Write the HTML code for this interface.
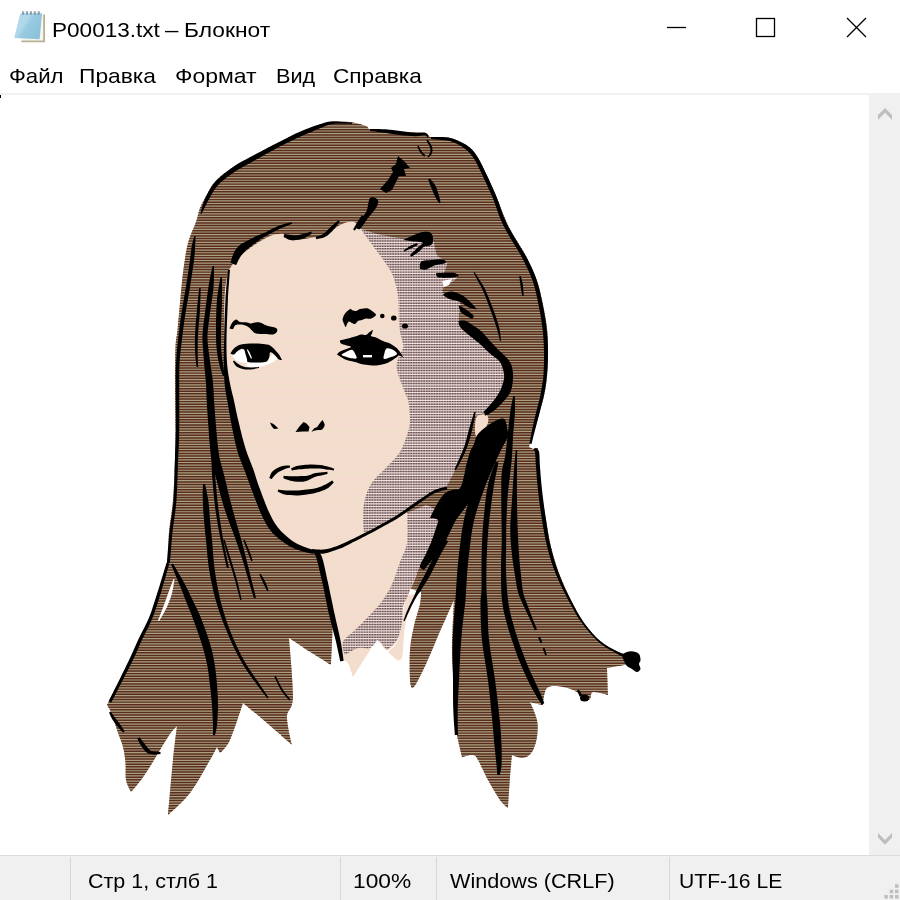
<!DOCTYPE html>
<html lang="ru">
<head>
<meta charset="utf-8">
<title>P00013.txt – Блокнот</title>
<style>
html,body{margin:0;padding:0;background:#fff;}
body{width:900px;height:900px;position:relative;overflow:hidden;font-family:"Liberation Sans",sans-serif;color:#000;}
.t{position:absolute;white-space:nowrap;line-height:1;transform-origin:0 0;}
.ti{top:19.5px;font-size:20.3px;}
.menu{top:66.2px;font-size:20.8px;}
#menuline{position:absolute;left:0;top:93px;width:900px;height:2px;background:#f0f0f0;}
#scroll{position:absolute;left:869px;top:95px;width:31px;height:760px;background:#f0f0f0;}
#status{position:absolute;left:0;top:855px;width:900px;height:45px;background:#f0f0f0;border-top:1px solid #dcdcdc;box-sizing:border-box;}
.sep{position:absolute;top:857px;width:1px;height:44px;background:#d7d7d7;}
.st{top:870.5px;font-size:20.8px;}
#art{position:absolute;left:0;top:95px;width:870px;height:759px;}
</style>
</head>
<body>
<!-- title bar -->
<svg id="icon" style="position:absolute;left:0;top:0" width="60" height="56" viewBox="0 0 60 56">
  <defs><linearGradient id="ig" x1="0" y1="0" x2="1" y2="0.6"><stop offset="0" stop-color="#b9deee"/><stop offset="0.45" stop-color="#aed7ea"/><stop offset="0.56" stop-color="#98cbe2"/><stop offset="1" stop-color="#8cc2dc"/></linearGradient></defs>
  <path d="M22 14.5 H45 V42.2 H21.5 Z" fill="#b9b195"/>
  <path d="M22 14 H43.2 V40.6 H21 Z" fill="#f7f5ee"/>
  <path d="M20.3 13.3 L42.1 13.3 L39.6 39.3 L14.2 38 Z" fill="url(#ig)"/>
  <path d="M22 13 H41.5" stroke="#6f7f95" stroke-width="3.4" stroke-dasharray="2.2 1.7" opacity="0.7"/>
</svg>
<div class="t ti" style="left:51.6px;transform:scaleX(1.112)">P00013.txt</div>
<div class="t ti" style="left:165.3px;transform:scaleX(1.188)">–</div>
<div class="t ti" style="left:183.5px;transform:scaleX(1.124)">Блокнот</div>
<svg style="position:absolute;left:650px;top:0" width="250" height="58" viewBox="0 0 250 58">
  <path d="M17 27.5 H36" stroke="#000" stroke-width="1.3" fill="none"/>
  <rect x="106.5" y="18.5" width="18" height="18" stroke="#000" stroke-width="1.3" fill="none"/>
  <path d="M197 18 L216 37 M216 18 L197 37" stroke="#000" stroke-width="1.3" fill="none"/>
</svg>
<!-- menu -->
<div class="t menu" style="left:8.9px;transform:scaleX(1.067)">Файл</div>
<div class="t menu" style="left:79.3px;transform:scaleX(1.096)">Правка</div>
<div class="t menu" style="left:175.4px;transform:scaleX(1.105)">Формат</div>
<div class="t menu" style="left:276.2px;transform:scaleX(1.041)">Вид</div>
<div class="t menu" style="left:332.8px;transform:scaleX(1.088)">Справка</div>
<div id="menuline"></div>
<!-- scrollbar -->
<div id="scroll"></div>
<svg style="position:absolute;left:870px;top:95px" width="30" height="760" viewBox="870 95 30 760">
  <path d="M885 108 L892 115 L892 119.7 L885 112.7 L878 119.7 L878 115 Z" fill="#bfbdbd"/>
  <path d="M878 833 L885 840 L892 833 L892 837.5 L885 844.7 L878 837.5 Z" fill="#bfbdbd"/>
</svg>
<!-- art -->
<svg id="art" viewBox="0 95 870 759" shape-rendering="geometricPrecision">
<defs><mask id="stripes" maskUnits="userSpaceOnUse" x="0" y="95" width="870" height="759"><path d="M0 96 h870 M0 98.6 h870 M0 101.2 h870 M0 103.8 h870 M0 106.4 h870 M0 109 h870 M0 111.5 h870 M0 114.1 h870 M0 116.7 h870 M0 119.3 h870 M0 121.9 h870 M0 124.5 h870 M0 127.1 h870 M0 129.7 h870 M0 132.3 h870 M0 134.9 h870 M0 137.4 h870 M0 140 h870 M0 142.6 h870 M0 145.2 h870 M0 147.8 h870 M0 150.4 h870 M0 153 h870 M0 155.6 h870 M0 158.2 h870 M0 160.8 h870 M0 163.3 h870 M0 165.9 h870 M0 168.5 h870 M0 171.1 h870 M0 173.7 h870 M0 176.3 h870 M0 178.9 h870 M0 181.5 h870 M0 184.1 h870 M0 186.7 h870 M0 189.2 h870 M0 191.8 h870 M0 194.4 h870 M0 197 h870 M0 199.6 h870 M0 202.2 h870 M0 204.8 h870 M0 207.4 h870 M0 210 h870 M0 212.6 h870 M0 215.1 h870 M0 217.7 h870 M0 220.3 h870 M0 222.9 h870 M0 225.5 h870 M0 228.1 h870 M0 230.7 h870 M0 233.3 h870 M0 235.9 h870 M0 238.5 h870 M0 241 h870 M0 243.6 h870 M0 246.2 h870 M0 248.8 h870 M0 251.4 h870 M0 254 h870 M0 256.6 h870 M0 259.2 h870 M0 261.8 h870 M0 264.4 h870 M0 266.9 h870 M0 269.5 h870 M0 272.1 h870 M0 274.7 h870 M0 277.3 h870 M0 279.9 h870 M0 282.5 h870 M0 285.1 h870 M0 287.7 h870 M0 290.2 h870 M0 292.8 h870 M0 295.4 h870 M0 298 h870 M0 300.6 h870 M0 303.2 h870 M0 305.8 h870 M0 308.4 h870 M0 311 h870 M0 313.6 h870 M0 316.1 h870 M0 318.7 h870 M0 321.3 h870 M0 323.9 h870 M0 326.5 h870 M0 329.1 h870 M0 331.7 h870 M0 334.3 h870 M0 336.9 h870 M0 339.5 h870 M0 342 h870 M0 344.6 h870 M0 347.2 h870 M0 349.8 h870 M0 352.4 h870 M0 355 h870 M0 357.6 h870 M0 360.2 h870 M0 362.8 h870 M0 365.4 h870 M0 367.9 h870 M0 370.5 h870 M0 373.1 h870 M0 375.7 h870 M0 378.3 h870 M0 380.9 h870 M0 383.5 h870 M0 386.1 h870 M0 388.7 h870 M0 391.3 h870 M0 393.8 h870 M0 396.4 h870 M0 399 h870 M0 401.6 h870 M0 404.2 h870 M0 406.8 h870 M0 409.4 h870 M0 412 h870 M0 414.6 h870 M0 417.2 h870 M0 419.7 h870 M0 422.3 h870 M0 424.9 h870 M0 427.5 h870 M0 430.1 h870 M0 432.7 h870 M0 435.3 h870 M0 437.9 h870 M0 440.5 h870 M0 443.1 h870 M0 445.6 h870 M0 448.2 h870 M0 450.8 h870 M0 453.4 h870 M0 456 h870 M0 458.6 h870 M0 461.2 h870 M0 463.8 h870 M0 466.4 h870 M0 469 h870 M0 471.5 h870 M0 474.1 h870 M0 476.7 h870 M0 479.3 h870 M0 481.9 h870 M0 484.5 h870 M0 487.1 h870 M0 489.7 h870 M0 492.3 h870 M0 494.9 h870 M0 497.4 h870 M0 500 h870 M0 502.6 h870 M0 505.2 h870 M0 507.8 h870 M0 510.4 h870 M0 513 h870 M0 515.6 h870 M0 518.2 h870 M0 520.8 h870 M0 523.3 h870 M0 525.9 h870 M0 528.5 h870 M0 531.1 h870 M0 533.7 h870 M0 536.3 h870 M0 538.9 h870 M0 541.5 h870 M0 544.1 h870 M0 546.7 h870 M0 549.2 h870 M0 551.8 h870 M0 554.4 h870 M0 557 h870 M0 559.6 h870 M0 562.2 h870 M0 564.8 h870 M0 567.4 h870 M0 570 h870 M0 572.6 h870 M0 575.1 h870 M0 577.7 h870 M0 580.3 h870 M0 582.9 h870 M0 585.5 h870 M0 588.1 h870 M0 590.7 h870 M0 593.3 h870 M0 595.9 h870 M0 598.5 h870 M0 601 h870 M0 603.6 h870 M0 606.2 h870 M0 608.8 h870 M0 611.4 h870 M0 614 h870 M0 616.6 h870 M0 619.2 h870 M0 621.8 h870 M0 624.4 h870 M0 626.9 h870 M0 629.5 h870 M0 632.1 h870 M0 634.7 h870 M0 637.3 h870 M0 639.9 h870 M0 642.5 h870 M0 645.1 h870 M0 647.7 h870 M0 650.3 h870 M0 652.8 h870 M0 655.4 h870 M0 658 h870 M0 660.6 h870 M0 663.2 h870 M0 665.8 h870 M0 668.4 h870 M0 671 h870 M0 673.6 h870 M0 676.2 h870 M0 678.7 h870 M0 681.3 h870 M0 683.9 h870 M0 686.5 h870 M0 689.1 h870 M0 691.7 h870 M0 694.3 h870 M0 696.9 h870 M0 699.5 h870 M0 702.1 h870 M0 704.7 h870 M0 707.2 h870 M0 709.8 h870 M0 712.4 h870 M0 715 h870 M0 717.6 h870 M0 720.2 h870 M0 722.8 h870 M0 725.4 h870 M0 728 h870 M0 730.6 h870 M0 733.1 h870 M0 735.7 h870 M0 738.3 h870 M0 740.9 h870 M0 743.5 h870 M0 746.1 h870 M0 748.7 h870 M0 751.3 h870 M0 753.9 h870 M0 756.5 h870 M0 759 h870 M0 761.6 h870 M0 764.2 h870 M0 766.8 h870 M0 769.4 h870 M0 772 h870 M0 774.6 h870 M0 777.2 h870 M0 779.8 h870 M0 782.4 h870 M0 784.9 h870 M0 787.5 h870 M0 790.1 h870 M0 792.7 h870 M0 795.3 h870 M0 797.9 h870 M0 800.5 h870 M0 803.1 h870 M0 805.7 h870 M0 808.3 h870 M0 810.8 h870 M0 813.4 h870 M0 816 h870 M0 818.6 h870 M0 821.2 h870 M0 823.8 h870 M0 826.4 h870 M0 829 h870 M0 831.6 h870 M0 834.2 h870 M0 836.7 h870 M0 839.3 h870 M0 841.9 h870 M0 844.5 h870 M0 847.1 h870 M0 849.7 h870 M0 852.3 h870 M0 854.9 h870" stroke="#fff" stroke-width="1.45" fill="none"/></mask></defs>
<g><path d="M322 124 C326.8 122.5 328.3 121.9 333 121.6 C337.7 121.3 344.5 121.3 350 122 C355.5 122.7 362.3 124.7 366 126 C369.7 127.3 366.3 129 372 130 C377.7 131 391 131.5 400 132 C409 132.5 426 133 426 133 C426 133 430 137 430 137 C430 137 445 137.2 450 138 C455 138.8 456.7 140.3 460 142 C463.3 143.7 467 145.3 470 148 C473 150.7 475.3 153.7 478 158 C480.7 162.3 483 167.7 486 174 C489 180.3 493 189 496 196 C499 203 501.5 210.2 504 216 C506.5 221.8 507.3 224.3 511 231 C514.7 237.7 521.8 248.2 526 256 C530.2 263.8 533.3 270.7 536 278 C538.7 285.3 540.2 291.7 542 300 C543.8 308.3 546 319.3 547 328 C548 336.7 548 343.8 548 352 C548 360.2 547.7 369.7 547 377 C546.3 384.3 545.2 390.5 544 396 C542.8 401.5 541.3 405.2 540 410 C538.7 414.8 537.5 420 536 425 C534.5 430 532.2 436.3 531 440 C529.8 443.7 529 447 529 447 C529 447 533 449 533 449 C533 449 538 448 538 448 C538 448 538.5 460 539 467 C539.5 474 539.8 481.2 541 490 C542.2 498.8 544.3 510.5 546 520 C547.7 529.5 548.8 538.2 551 547 C553.2 555.8 555.7 564.2 559 573 C562.3 581.8 566.8 591.7 571 600 C575.2 608.3 579 616 584 623 C589 630 595.3 637.2 601 642 C606.7 646.8 613.5 649.7 618 652 C622.5 654.3 626 654 628 656 C630 658 630 664 630 664 C630 664 607 668 607 668 C607 668 608 695 608 695 C608 695 596 691.3 593 692 C590 692.7 591.5 697.7 590 699 C588.5 700.3 586.2 701.2 584 700 C581.8 698.8 580.5 694.2 577 692 C573.5 689.8 568 687.7 563 687 C558 686.3 550.3 685 547 688 C543.7 691 543 705 543 705 C543 705 535.2 703.5 533 703 C530.8 702.5 530 702 530 702 C530 702 535.8 714.2 537 720 C538.2 725.8 537.8 731.7 537 737 C536.2 742.3 534.3 748.5 532 752 C529.7 755.5 526.3 757.5 523 758 C519.7 758.5 512 755 512 755 C512 755 510.7 768.2 510 777 C509.3 785.8 508 808 508 808 C508 808 503.3 804.7 500 800 C496.7 795.3 491.7 786.7 488 780 C484.3 773.3 480.5 764.2 478 760 C475.5 755.8 475.7 755.5 473 755 C470.3 754.5 462 757 462 757 C462 757 459.2 746.2 458 740 C456.8 733.8 455.7 728.8 455 720 C454.3 711.2 454.5 698.7 454 687 C453.5 675.3 452 664.5 452 650 C452 635.5 454 600 454 600 C454 600 448.7 612 446 618 C443.3 624 441.3 628.3 438 636 C434.7 643.7 429.7 656 426 664 C422.3 672 418.3 680 416 684 C413.7 688 412 688 412 688 C412 688 410.3 686.3 410 680 C409.7 673.7 409.3 659 410 650 C410.7 641 412.3 633.7 414 626 C415.7 618.3 418.8 609.7 420 604 C421.2 598.3 421 592 421 592 C421 592 400 585 400 585 C400 585 334 600 334 600 C334 600 332.5 632 332.5 632 C332.5 632 331 665 331 665 C331 665 324 660.5 320 658 C316 655.5 312.2 653.4 307 650 C301.8 646.6 288.9 637.8 288.9 637.8 C288.9 637.8 293.3 683.8 293 697 C292.7 710.2 287.2 709 287 717 C286.8 725 292 745 292 745 C292 745 275.2 730 267 723 C258.8 716 243 703 243 703 C243 703 233.8 731.7 230 740 C226.2 748.3 220 753 220 753 C220 753 217 747 217 747 C217 747 214.5 752.3 210 760 C205.5 767.7 197 783.8 190 793 C183 802.2 168 815 168 815 C168 815 171.5 774.8 173 760 C174.5 745.2 177 726 177 726 C177 726 172.8 730 170 734 C167.2 738 163.2 744.8 160 750 C156.8 755.2 154.2 760 151 765 C147.8 770 144.3 775.5 141 780 C137.7 784.5 131 792 131 792 C131 792 126.9 784.8 126 780 C125.1 775.2 126 768.5 125.5 763 C125 757.5 124.4 752.5 123 747 C121.6 741.5 118.8 735.5 117 730 C115.2 724.5 113.7 718.2 112 714 C110.3 709.8 107 705 107 705 C107 705 122.3 675.8 130 660 C137.7 644.2 146.8 626.2 153 610 C159.2 593.8 164.3 576 167 563 C169.7 550 168 542.5 169 532 C170 521.5 172 512 173 500 C174 488 174.6 471.7 175 460 C175.4 448.3 175.5 443.3 175.5 430 C175.5 416.7 175 393.8 175 380 C175 366.2 175.1 355.3 175.5 347 C175.9 338.7 176.8 337.3 177.5 330 C178.2 322.7 179.1 312.5 180 303 C180.9 293.5 181.7 283 183 273 C184.3 263 185.8 251.5 188 243 C190.2 234.5 194 227.8 196 222 C198 216.2 198.2 212.5 200 208 C201.8 203.5 204.1 199.5 206.7 195 C209.3 190.5 211.2 185.7 215.6 181 C220 176.3 227.4 171 233.3 167 C239.2 163 245.1 160.3 251 157 C256.9 153.7 263.1 150.4 269 147.3 C274.9 144.2 280.8 141.2 286.7 138.4 C292.6 135.6 298.5 132.8 304.4 130.4 C310.3 128 317.2 125.5 322 124 Z" fill="#aaa07c"/>
<path d="M229 270 C229 270 232.5 263.7 236 260 C239.5 256.3 244.3 252 250 248 C255.7 244 264.3 238.3 270 236 C275.7 233.7 280.7 233.3 284 234 C287.3 234.7 285.7 239.3 290 240 C294.3 240.7 304 239 310 238 C316 237 320.7 236.3 326 234 C331.3 231.7 337.3 226 342 224 C346.7 222 350.8 221.2 354 222 C357.2 222.8 361 229 361 229 C361 229 372 240 372 240 C372 240 386 257 386 257 C386 257 397 272 397 272 C397 272 408 300 408 300 C408 300 420 400 420 400 C420 400 440 480 440 480 C440 480 447 487 446 489 C445 491 438.3 490 434 492 C429.7 494 425.7 497.2 420 501 C414.3 504.8 405 511.7 400 515 C395 518.3 395 518.2 390 521 C385 523.8 376.7 528.5 370 532 C363.3 535.5 356.3 539.2 350 542 C343.7 544.8 338 547.3 332 549 C326 550.7 319.3 552 314 552 C308.7 552 304.7 550.3 300 549 C295.3 547.7 290.7 547 286 544 C281.3 541 276.3 536.5 272 531 C267.7 525.5 263.7 519.3 260 511 C256.3 502.7 253.3 492.7 250 481 C246.7 469.3 243 454.3 240 441 C237 427.7 234 411.2 232 401 C230 390.8 229.2 387.3 228 380 C226.8 372.7 225.7 365.3 225 357 C224.3 348.7 224 341.2 224 330 C224 318.8 224.2 300 225 290 C225.8 280 229 270 229 270 Z" fill="#efe2c9"/>
<path d="M314 552 C314 552 326 550.7 332 549 C338 547.3 343.7 544.8 350 542 C356.3 539.2 363.3 535.5 370 532 C376.7 528.5 383.8 524.3 390 521 C396.2 517.7 407 512 407 512 C407 512 420 550 420 550 C420 550 419 565.5 417 573 C415 580.5 410.3 589.3 408 595 C405.7 600.7 404 602.3 403 607 C402 611.7 403 617.5 402 623 C401 628.5 399.5 635.5 397 640 C394.5 644.5 389.8 649.7 387 650 C384.2 650.3 381.7 643.7 380 642 C378.3 640.3 378.7 638.7 377 640 C375.3 641.3 370 650 370 650 C370 650 353 677 353 677 C353 677 349.8 665.8 348 663 C346.2 660.2 342 660 342 660 C342 660 339.7 647.5 338 640 C336.3 632.5 334.2 624.7 332 615 C329.8 605.3 327 591.2 325 582 C323 572.8 321.8 565 320 560 C318.2 555 314 552 314 552 Z" fill="#efe2c9"/>
<path d="M407 595 C407 595 418 594 418 594 C418 594 414.8 599 413 603 C411.2 607 408.5 613 407 618 C405.5 623 404.8 626.5 404 633 C403.2 639.5 403.2 652.5 402 657 C400.8 661.5 397 660 397 660 C397 660 388 652 388 652 C388 652 394.7 646.5 397 642 C399.3 637.5 400.8 630.8 402 625 C403.2 619.2 403.2 612 404 607 C404.8 602 407 595 407 595 Z" fill="#efe2c9"/>
<path d="M361 229 C361 229 366.3 230.7 369 231.5 C371.7 232.3 373.2 233.1 377 234 C380.8 234.9 387.7 236.2 392 237 C396.3 237.8 399.7 238.4 403 238.5 C406.3 238.6 409.2 238.2 412 237.5 C414.8 236.8 416.7 234.2 420 234 C423.3 233.8 429.7 234.7 432 236 C434.3 237.3 433.2 238.8 434 242 C434.8 245.2 435.3 252 437 255 C438.7 258 442.3 258.5 444 260 C445.7 261.5 447 261.8 447 264 C447 266.2 444 273 444 273 C444 273 457 275 457 275 C457 275 457.2 278 455 280 C452.8 282 446 284.8 444 287 C442 289.2 443 293 443 293 C443 293 457.3 299.7 460 303 C462.7 306.3 459.2 310 459 313 C458.8 316 459 321 459 321 C459 321 463.5 329.5 467 333 C470.5 336.5 476.2 339.2 480 342 C483.8 344.8 486.7 347.3 490 350 C493.3 352.7 497.3 354.3 500 358 C502.7 361.7 505.3 366.3 506 372 C506.7 377.7 505.7 387.2 504 392 C502.3 396.8 499.3 397.7 496 401 C492.7 404.3 487.7 409.5 484 412 C480.3 414.5 474 416 474 416 C474 416 471 431.3 468 440 C465 448.7 459.7 460 456 468 C452.3 476 446 488 446 488 C446 488 438.3 489 434 491 C429.7 493 425.7 496.2 420 500 C414.3 503.8 405 510.7 400 514 C395 517.3 395 517.2 390 520 C385 522.8 374.3 529 370 531 C365.7 533 364 532 364 532 C364 532 363 524.7 363 520 C363 515.3 363.2 509 364 504 C364.8 499 366.3 494 368 490 C369.7 486 371 483.7 374 480 C377 476.3 381.7 472.7 386 468 C390.3 463.3 396.3 458 400 452 C403.7 446 406.3 437.3 408 432 C409.7 426.7 409.9 425 410 420 C410.1 415 409.2 406.3 408.5 402 C407.8 397.7 407.1 398 405.6 394 C404.1 390 401 382.5 399.5 378 C398 373.5 396.8 370.7 396.7 367 C396.6 363.3 397.9 359.3 399 356 C400.1 352.7 403.2 350.3 403.5 347 C403.8 343.7 401.8 340.2 401 336 C400.2 331.8 399.4 328.2 399 322 C398.6 315.8 399 305.5 398.4 299 C397.8 292.5 396.6 287.7 395.3 283 C394 278.3 393 275.3 390.7 271 C388.4 266.7 384.4 261.4 381.3 257 C378.2 252.6 374.7 248.2 372 244.5 C369.3 240.8 366.8 237.6 365 235 C363.2 232.4 361 229 361 229 Z" fill="#efe0dc"/>
<path d="M407 513 C407 513 426 505 426 505 C426 505 439 509.2 440 515 C441 520.8 434.8 532.5 432 540 C429.2 547.5 425.5 554.5 423 560 C420.5 565.5 419.5 567.2 417 573 C414.5 578.8 410.3 589.3 408 595 C405.7 600.7 404 602.3 403 607 C402 611.7 403 617.5 402 623 C401 628.5 399.5 635.5 397 640 C394.5 644.5 387 650 387 650 C387 650 381.7 643.7 380 642 C378.3 640.3 377 640 377 640 C377 640 373.2 646.7 370 648 C366.8 649.3 362.2 646.8 358 648 C353.8 649.2 345 655 345 655 C345 655 341.3 646.2 343 642 C344.7 637.8 351 634 355 630 C359 626 362.3 623 367 618 C371.7 613 378.7 606 383 600 C387.3 594 390.2 588.3 393 582 C395.8 575.7 397.7 568.5 400 562 C402.3 555.5 405.8 551.2 407 543 C408.2 534.8 407 513 407 513 Z" fill="#efe0dc"/>
<path d="M476.7 416.7 C478.6 414 484.8 413.9 486.7 415 C488.6 416.1 488.8 420.2 487.8 423.3 C486.9 426.4 482.9 431.1 481 433.3 C479.1 435.5 477.7 437.1 476.7 436.7 C475.7 436.3 475 434.3 475 431 C475 427.7 474.8 419.4 476.7 416.7 Z" fill="#efe2c9"/></g>
<g mask="url(#stripes)"><path d="M322 124 C326.8 122.5 328.3 121.9 333 121.6 C337.7 121.3 344.5 121.3 350 122 C355.5 122.7 362.3 124.7 366 126 C369.7 127.3 366.3 129 372 130 C377.7 131 391 131.5 400 132 C409 132.5 426 133 426 133 C426 133 430 137 430 137 C430 137 445 137.2 450 138 C455 138.8 456.7 140.3 460 142 C463.3 143.7 467 145.3 470 148 C473 150.7 475.3 153.7 478 158 C480.7 162.3 483 167.7 486 174 C489 180.3 493 189 496 196 C499 203 501.5 210.2 504 216 C506.5 221.8 507.3 224.3 511 231 C514.7 237.7 521.8 248.2 526 256 C530.2 263.8 533.3 270.7 536 278 C538.7 285.3 540.2 291.7 542 300 C543.8 308.3 546 319.3 547 328 C548 336.7 548 343.8 548 352 C548 360.2 547.7 369.7 547 377 C546.3 384.3 545.2 390.5 544 396 C542.8 401.5 541.3 405.2 540 410 C538.7 414.8 537.5 420 536 425 C534.5 430 532.2 436.3 531 440 C529.8 443.7 529 447 529 447 C529 447 533 449 533 449 C533 449 538 448 538 448 C538 448 538.5 460 539 467 C539.5 474 539.8 481.2 541 490 C542.2 498.8 544.3 510.5 546 520 C547.7 529.5 548.8 538.2 551 547 C553.2 555.8 555.7 564.2 559 573 C562.3 581.8 566.8 591.7 571 600 C575.2 608.3 579 616 584 623 C589 630 595.3 637.2 601 642 C606.7 646.8 613.5 649.7 618 652 C622.5 654.3 626 654 628 656 C630 658 630 664 630 664 C630 664 607 668 607 668 C607 668 608 695 608 695 C608 695 596 691.3 593 692 C590 692.7 591.5 697.7 590 699 C588.5 700.3 586.2 701.2 584 700 C581.8 698.8 580.5 694.2 577 692 C573.5 689.8 568 687.7 563 687 C558 686.3 550.3 685 547 688 C543.7 691 543 705 543 705 C543 705 535.2 703.5 533 703 C530.8 702.5 530 702 530 702 C530 702 535.8 714.2 537 720 C538.2 725.8 537.8 731.7 537 737 C536.2 742.3 534.3 748.5 532 752 C529.7 755.5 526.3 757.5 523 758 C519.7 758.5 512 755 512 755 C512 755 510.7 768.2 510 777 C509.3 785.8 508 808 508 808 C508 808 503.3 804.7 500 800 C496.7 795.3 491.7 786.7 488 780 C484.3 773.3 480.5 764.2 478 760 C475.5 755.8 475.7 755.5 473 755 C470.3 754.5 462 757 462 757 C462 757 459.2 746.2 458 740 C456.8 733.8 455.7 728.8 455 720 C454.3 711.2 454.5 698.7 454 687 C453.5 675.3 452 664.5 452 650 C452 635.5 454 600 454 600 C454 600 448.7 612 446 618 C443.3 624 441.3 628.3 438 636 C434.7 643.7 429.7 656 426 664 C422.3 672 418.3 680 416 684 C413.7 688 412 688 412 688 C412 688 410.3 686.3 410 680 C409.7 673.7 409.3 659 410 650 C410.7 641 412.3 633.7 414 626 C415.7 618.3 418.8 609.7 420 604 C421.2 598.3 421 592 421 592 C421 592 400 585 400 585 C400 585 334 600 334 600 C334 600 332.5 632 332.5 632 C332.5 632 331 665 331 665 C331 665 324 660.5 320 658 C316 655.5 312.2 653.4 307 650 C301.8 646.6 288.9 637.8 288.9 637.8 C288.9 637.8 293.3 683.8 293 697 C292.7 710.2 287.2 709 287 717 C286.8 725 292 745 292 745 C292 745 275.2 730 267 723 C258.8 716 243 703 243 703 C243 703 233.8 731.7 230 740 C226.2 748.3 220 753 220 753 C220 753 217 747 217 747 C217 747 214.5 752.3 210 760 C205.5 767.7 197 783.8 190 793 C183 802.2 168 815 168 815 C168 815 171.5 774.8 173 760 C174.5 745.2 177 726 177 726 C177 726 172.8 730 170 734 C167.2 738 163.2 744.8 160 750 C156.8 755.2 154.2 760 151 765 C147.8 770 144.3 775.5 141 780 C137.7 784.5 131 792 131 792 C131 792 126.9 784.8 126 780 C125.1 775.2 126 768.5 125.5 763 C125 757.5 124.4 752.5 123 747 C121.6 741.5 118.8 735.5 117 730 C115.2 724.5 113.7 718.2 112 714 C110.3 709.8 107 705 107 705 C107 705 122.3 675.8 130 660 C137.7 644.2 146.8 626.2 153 610 C159.2 593.8 164.3 576 167 563 C169.7 550 168 542.5 169 532 C170 521.5 172 512 173 500 C174 488 174.6 471.7 175 460 C175.4 448.3 175.5 443.3 175.5 430 C175.5 416.7 175 393.8 175 380 C175 366.2 175.1 355.3 175.5 347 C175.9 338.7 176.8 337.3 177.5 330 C178.2 322.7 179.1 312.5 180 303 C180.9 293.5 181.7 283 183 273 C184.3 263 185.8 251.5 188 243 C190.2 234.5 194 227.8 196 222 C198 216.2 198.2 212.5 200 208 C201.8 203.5 204.1 199.5 206.7 195 C209.3 190.5 211.2 185.7 215.6 181 C220 176.3 227.4 171 233.3 167 C239.2 163 245.1 160.3 251 157 C256.9 153.7 263.1 150.4 269 147.3 C274.9 144.2 280.8 141.2 286.7 138.4 C292.6 135.6 298.5 132.8 304.4 130.4 C310.3 128 317.2 125.5 322 124 Z" fill="#582a20"/>
<path d="M229 270 C229 270 232.5 263.7 236 260 C239.5 256.3 244.3 252 250 248 C255.7 244 264.3 238.3 270 236 C275.7 233.7 280.7 233.3 284 234 C287.3 234.7 285.7 239.3 290 240 C294.3 240.7 304 239 310 238 C316 237 320.7 236.3 326 234 C331.3 231.7 337.3 226 342 224 C346.7 222 350.8 221.2 354 222 C357.2 222.8 361 229 361 229 C361 229 372 240 372 240 C372 240 386 257 386 257 C386 257 397 272 397 272 C397 272 408 300 408 300 C408 300 420 400 420 400 C420 400 440 480 440 480 C440 480 447 487 446 489 C445 491 438.3 490 434 492 C429.7 494 425.7 497.2 420 501 C414.3 504.8 405 511.7 400 515 C395 518.3 395 518.2 390 521 C385 523.8 376.7 528.5 370 532 C363.3 535.5 356.3 539.2 350 542 C343.7 544.8 338 547.3 332 549 C326 550.7 319.3 552 314 552 C308.7 552 304.7 550.3 300 549 C295.3 547.7 290.7 547 286 544 C281.3 541 276.3 536.5 272 531 C267.7 525.5 263.7 519.3 260 511 C256.3 502.7 253.3 492.7 250 481 C246.7 469.3 243 454.3 240 441 C237 427.7 234 411.2 232 401 C230 390.8 229.2 387.3 228 380 C226.8 372.7 225.7 365.3 225 357 C224.3 348.7 224 341.2 224 330 C224 318.8 224.2 300 225 290 C225.8 280 229 270 229 270 Z" fill="#f6d9d0"/>
<path d="M314 552 C314 552 326 550.7 332 549 C338 547.3 343.7 544.8 350 542 C356.3 539.2 363.3 535.5 370 532 C376.7 528.5 383.8 524.3 390 521 C396.2 517.7 407 512 407 512 C407 512 420 550 420 550 C420 550 419 565.5 417 573 C415 580.5 410.3 589.3 408 595 C405.7 600.7 404 602.3 403 607 C402 611.7 403 617.5 402 623 C401 628.5 399.5 635.5 397 640 C394.5 644.5 389.8 649.7 387 650 C384.2 650.3 381.7 643.7 380 642 C378.3 640.3 378.7 638.7 377 640 C375.3 641.3 370 650 370 650 C370 650 353 677 353 677 C353 677 349.8 665.8 348 663 C346.2 660.2 342 660 342 660 C342 660 339.7 647.5 338 640 C336.3 632.5 334.2 624.7 332 615 C329.8 605.3 327 591.2 325 582 C323 572.8 321.8 565 320 560 C318.2 555 314 552 314 552 Z" fill="#f6d9d0"/>
<path d="M407 595 C407 595 418 594 418 594 C418 594 414.8 599 413 603 C411.2 607 408.5 613 407 618 C405.5 623 404.8 626.5 404 633 C403.2 639.5 403.2 652.5 402 657 C400.8 661.5 397 660 397 660 C397 660 388 652 388 652 C388 652 394.7 646.5 397 642 C399.3 637.5 400.8 630.8 402 625 C403.2 619.2 403.2 612 404 607 C404.8 602 407 595 407 595 Z" fill="#f6d9d0"/>
<path d="M361 229 C361 229 366.3 230.7 369 231.5 C371.7 232.3 373.2 233.1 377 234 C380.8 234.9 387.7 236.2 392 237 C396.3 237.8 399.7 238.4 403 238.5 C406.3 238.6 409.2 238.2 412 237.5 C414.8 236.8 416.7 234.2 420 234 C423.3 233.8 429.7 234.7 432 236 C434.3 237.3 433.2 238.8 434 242 C434.8 245.2 435.3 252 437 255 C438.7 258 442.3 258.5 444 260 C445.7 261.5 447 261.8 447 264 C447 266.2 444 273 444 273 C444 273 457 275 457 275 C457 275 457.2 278 455 280 C452.8 282 446 284.8 444 287 C442 289.2 443 293 443 293 C443 293 457.3 299.7 460 303 C462.7 306.3 459.2 310 459 313 C458.8 316 459 321 459 321 C459 321 463.5 329.5 467 333 C470.5 336.5 476.2 339.2 480 342 C483.8 344.8 486.7 347.3 490 350 C493.3 352.7 497.3 354.3 500 358 C502.7 361.7 505.3 366.3 506 372 C506.7 377.7 505.7 387.2 504 392 C502.3 396.8 499.3 397.7 496 401 C492.7 404.3 487.7 409.5 484 412 C480.3 414.5 474 416 474 416 C474 416 471 431.3 468 440 C465 448.7 459.7 460 456 468 C452.3 476 446 488 446 488 C446 488 438.3 489 434 491 C429.7 493 425.7 496.2 420 500 C414.3 503.8 405 510.7 400 514 C395 517.3 395 517.2 390 520 C385 522.8 374.3 529 370 531 C365.7 533 364 532 364 532 C364 532 363 524.7 363 520 C363 515.3 363.2 509 364 504 C364.8 499 366.3 494 368 490 C369.7 486 371 483.7 374 480 C377 476.3 381.7 472.7 386 468 C390.3 463.3 396.3 458 400 452 C403.7 446 406.3 437.3 408 432 C409.7 426.7 409.9 425 410 420 C410.1 415 409.2 406.3 408.5 402 C407.8 397.7 407.1 398 405.6 394 C404.1 390 401 382.5 399.5 378 C398 373.5 396.8 370.7 396.7 367 C396.6 363.3 397.9 359.3 399 356 C400.1 352.7 403.2 350.3 403.5 347 C403.8 343.7 401.8 340.2 401 336 C400.2 331.8 399.4 328.2 399 322 C398.6 315.8 399 305.5 398.4 299 C397.8 292.5 396.6 287.7 395.3 283 C394 278.3 393 275.3 390.7 271 C388.4 266.7 384.4 261.4 381.3 257 C378.2 252.6 374.7 248.2 372 244.5 C369.3 240.8 366.8 237.6 365 235 C363.2 232.4 361 229 361 229 Z" fill="#6c5254"/>
<path d="M407 513 C407 513 426 505 426 505 C426 505 439 509.2 440 515 C441 520.8 434.8 532.5 432 540 C429.2 547.5 425.5 554.5 423 560 C420.5 565.5 419.5 567.2 417 573 C414.5 578.8 410.3 589.3 408 595 C405.7 600.7 404 602.3 403 607 C402 611.7 403 617.5 402 623 C401 628.5 399.5 635.5 397 640 C394.5 644.5 387 650 387 650 C387 650 381.7 643.7 380 642 C378.3 640.3 377 640 377 640 C377 640 373.2 646.7 370 648 C366.8 649.3 362.2 646.8 358 648 C353.8 649.2 345 655 345 655 C345 655 341.3 646.2 343 642 C344.7 637.8 351 634 355 630 C359 626 362.3 623 367 618 C371.7 613 378.7 606 383 600 C387.3 594 390.2 588.3 393 582 C395.8 575.7 397.7 568.5 400 562 C402.3 555.5 405.8 551.2 407 543 C408.2 534.8 407 513 407 513 Z" fill="#6c5254"/>
<path d="M476.7 416.7 C478.6 414 484.8 413.9 486.7 415 C488.6 416.1 488.8 420.2 487.8 423.3 C486.9 426.4 482.9 431.1 481 433.3 C479.1 435.5 477.7 437.1 476.7 436.7 C475.7 436.3 475 434.3 475 431 C475 427.7 474.8 419.4 476.7 416.7 Z" fill="#f6d9d0"/></g>
<clipPath id="shc"><path d="M361 229 C361 229 366.3 230.7 369 231.5 C371.7 232.3 373.2 233.1 377 234 C380.8 234.9 387.7 236.2 392 237 C396.3 237.8 399.7 238.4 403 238.5 C406.3 238.6 409.2 238.2 412 237.5 C414.8 236.8 416.7 234.2 420 234 C423.3 233.8 429.7 234.7 432 236 C434.3 237.3 433.2 238.8 434 242 C434.8 245.2 435.3 252 437 255 C438.7 258 442.3 258.5 444 260 C445.7 261.5 447 261.8 447 264 C447 266.2 444 273 444 273 C444 273 457 275 457 275 C457 275 457.2 278 455 280 C452.8 282 446 284.8 444 287 C442 289.2 443 293 443 293 C443 293 457.3 299.7 460 303 C462.7 306.3 459.2 310 459 313 C458.8 316 459 321 459 321 C459 321 463.5 329.5 467 333 C470.5 336.5 476.2 339.2 480 342 C483.8 344.8 486.7 347.3 490 350 C493.3 352.7 497.3 354.3 500 358 C502.7 361.7 505.3 366.3 506 372 C506.7 377.7 505.7 387.2 504 392 C502.3 396.8 499.3 397.7 496 401 C492.7 404.3 487.7 409.5 484 412 C480.3 414.5 474 416 474 416 C474 416 471 431.3 468 440 C465 448.7 459.7 460 456 468 C452.3 476 446 488 446 488 C446 488 438.3 489 434 491 C429.7 493 425.7 496.2 420 500 C414.3 503.8 405 510.7 400 514 C395 517.3 395 517.2 390 520 C385 522.8 374.3 529 370 531 C365.7 533 364 532 364 532 C364 532 363 524.7 363 520 C363 515.3 363.2 509 364 504 C364.8 499 366.3 494 368 490 C369.7 486 371 483.7 374 480 C377 476.3 381.7 472.7 386 468 C390.3 463.3 396.3 458 400 452 C403.7 446 406.3 437.3 408 432 C409.7 426.7 409.9 425 410 420 C410.1 415 409.2 406.3 408.5 402 C407.8 397.7 407.1 398 405.6 394 C404.1 390 401 382.5 399.5 378 C398 373.5 396.8 370.7 396.7 367 C396.6 363.3 397.9 359.3 399 356 C400.1 352.7 403.2 350.3 403.5 347 C403.8 343.7 401.8 340.2 401 336 C400.2 331.8 399.4 328.2 399 322 C398.6 315.8 399 305.5 398.4 299 C397.8 292.5 396.6 287.7 395.3 283 C394 278.3 393 275.3 390.7 271 C388.4 266.7 384.4 261.4 381.3 257 C378.2 252.6 374.7 248.2 372 244.5 C369.3 240.8 366.8 237.6 365 235 C363.2 232.4 361 229 361 229 Z"/><path d="M407 513 C407 513 426 505 426 505 C426 505 439 509.2 440 515 C441 520.8 434.8 532.5 432 540 C429.2 547.5 425.5 554.5 423 560 C420.5 565.5 419.5 567.2 417 573 C414.5 578.8 410.3 589.3 408 595 C405.7 600.7 404 602.3 403 607 C402 611.7 403 617.5 402 623 C401 628.5 399.5 635.5 397 640 C394.5 644.5 387 650 387 650 C387 650 381.7 643.7 380 642 C378.3 640.3 377 640 377 640 C377 640 373.2 646.7 370 648 C366.8 649.3 362.2 646.8 358 648 C353.8 649.2 345 655 345 655 C345 655 341.3 646.2 343 642 C344.7 637.8 351 634 355 630 C359 626 362.3 623 367 618 C371.7 613 378.7 606 383 600 C387.3 594 390.2 588.3 393 582 C395.8 575.7 397.7 568.5 400 562 C402.3 555.5 405.8 551.2 407 543 C408.2 534.8 407 513 407 513 Z"/></clipPath>
<path d="M340 220 v450 M342.6 220 v450 M345.2 220 v450 M347.8 220 v450 M350.4 220 v450 M352.9 220 v450 M355.5 220 v450 M358.1 220 v450 M360.7 220 v450 M363.3 220 v450 M365.9 220 v450 M368.5 220 v450 M371.1 220 v450 M373.7 220 v450 M376.3 220 v450 M378.9 220 v450 M381.4 220 v450 M384 220 v450 M386.6 220 v450 M389.2 220 v450 M391.8 220 v450 M394.4 220 v450 M397 220 v450 M399.6 220 v450 M402.2 220 v450 M404.8 220 v450 M407.3 220 v450 M409.9 220 v450 M412.5 220 v450 M415.1 220 v450 M417.7 220 v450 M420.3 220 v450 M422.9 220 v450 M425.5 220 v450 M428.1 220 v450 M430.6 220 v450 M433.2 220 v450 M435.8 220 v450 M438.4 220 v450 M441 220 v450 M443.6 220 v450 M446.2 220 v450 M448.8 220 v450 M451.4 220 v450 M454 220 v450 M456.6 220 v450 M459.1 220 v450 M461.7 220 v450 M464.3 220 v450 M466.9 220 v450 M469.5 220 v450 M472.1 220 v450 M474.7 220 v450 M477.3 220 v450 M479.9 220 v450 M482.4 220 v450 M485 220 v450 M487.6 220 v450 M490.2 220 v450 M492.8 220 v450 M495.4 220 v450 M498 220 v450 M500.6 220 v450 M503.2 220 v450 M505.8 220 v450 M508.4 220 v450 M510.9 220 v450 M513.5 220 v450 M516.1 220 v450" stroke="#f6e6e2" stroke-width="1" stroke-opacity="0.5" fill="none" clip-path="url(#shc)"/>
<g fill="#fff">
<path d="M232.5 355.5 C232.7 354.2 235.2 353 237 352 C238.8 351 242.1 349.2 243.5 349.5 C244.9 349.8 244.9 352.4 245.5 354 C246.1 355.6 246.6 357.6 247 359 C247.4 360.4 249 361.9 248 362.5 C247 363.1 243 362.9 241 362.5 C239 362.1 237.4 361.2 236 360 C234.6 358.8 232.3 356.8 232.5 355.5 Z"/>
<path d="M248 362 C249.5 361.3 253.2 362.5 256 362.5 C258.8 362.5 262.7 362.8 265 362 C267.3 361.2 268.7 358.8 270 357.5 C271.3 356.2 271.8 354.3 273 354.5 C274.2 354.7 277.2 357.2 277 358.5 C276.8 359.8 274.2 361.2 272 362.5 C269.8 363.8 266.8 365.2 264 366 C261.2 366.8 257.8 366.9 255 367 C252.2 367.1 248.2 367.3 247 366.5 C245.8 365.7 246.5 362.7 248 362 Z"/>
</g>
<g fill="#000">
<path d="M622.5 655 C623 653.5 625.2 652.6 627 652 C628.8 651.4 631 651.2 633 651.5 C635 651.8 637.8 652.6 639 654 C640.2 655.4 640.5 658.3 640.5 660 C640.5 661.7 639 662.5 639 664 C639 665.5 640.8 667.7 640.5 669 C640.2 670.3 638.4 672 637 672 C635.6 672 633.7 670 632 669 C630.3 668 628.3 667.3 627 666 C625.7 664.7 624.8 662.8 624 661 C623.2 659.2 622 656.5 622.5 655 Z"/>
<path d="M352 122.8 C352 122.8 338 121.4 332.9 121.6 C327.8 121.7 326.3 122.4 321.4 123.8 C316.6 125.3 309.7 127.7 303.9 130.1 C298.1 132.5 292.3 135.3 286.5 138.2 C280.7 141 274.9 144.1 268.9 147.2 C263 150.3 256.8 153.5 250.8 156.8 C244.8 160.1 238.9 162.9 233.1 166.9 C227.3 171 220.3 176.3 215.9 180.9 C211.5 185.6 209 190.7 206.8 195 C204.5 199.3 203.4 203.4 202.3 206.5 C201.3 209.7 200.5 213.8 200.5 213.8 C200.5 213.8 201.5 214.2 201.5 214.2 C201.5 214.2 203.2 210.3 204.7 207.5 C206.1 204.6 207.8 200.9 210.2 197 C212.6 193.1 214.8 188.4 219.1 184.1 C223.4 179.7 230.2 174.9 235.9 171.1 C241.6 167.3 247.4 164.5 253.2 161.2 C259.1 157.9 265.2 154.3 271.1 151.2 C276.9 148 282.7 145 288.5 142.2 C294.3 139.4 300 136.8 305.7 134.3 C311.4 131.8 318 128.9 322.6 127.2 C327.1 125.5 328.2 124.5 333.1 124 C338 123.6 352 124.2 352 124.2 C352 124.2 352 122.8 352 122.8 Z"/>
<path d="M194.5 235.9 C194.5 235.9 192.5 241.8 191.8 245.8 C191 249.8 191 252.9 190 259.7 C189.1 266.6 187.4 277.9 186 286.7 C184.6 295.5 182.8 303.9 181.5 312.7 C180.2 321.6 179 331.9 178.1 339.8 C177.2 347.6 176.6 353.2 176.3 359.9 C175.9 366.6 175.8 368.3 175.8 380 C175.7 391.7 175.9 416.7 175.8 430 C175.6 443.3 175.3 448.3 174.9 459.9 C174.5 471.6 174.4 487.9 173.5 499.9 C172.6 511.9 170.6 521.3 169.5 531.8 C168.4 542.3 167 562.9 167 562.9 C167 562.9 170 563.1 170 563.1 C170 563.1 171.4 542.7 172.5 532.2 C173.6 521.7 175.6 512.1 176.5 500.1 C177.4 488.1 177.6 471.7 178.1 460.1 C178.6 448.4 179.1 443.4 179.2 430 C179.4 416.7 179.2 391.7 179.2 380 C179.3 368.4 179.3 366.7 179.7 360.1 C180.2 353.5 180.9 348 181.9 340.2 C182.8 332.4 184.1 322.1 185.5 313.3 C186.8 304.5 188.6 296.2 190 287.3 C191.4 278.5 193.1 267.1 194 260.3 C194.9 253.4 195 250.2 195.2 246.2 C195.5 242.2 195.5 236.1 195.5 236.1 C195.5 236.1 194.5 235.9 194.5 235.9 Z"/>
<path d="M166.6 562.6 C166.6 562.6 156 598.6 151.4 611.4 C146.7 624.2 142.1 631.3 138.4 639.3 C134.8 647.2 134.4 648.9 129.4 659.2 C124.5 669.6 108.7 701.3 108.7 701.3 C108.7 701.3 111.3 702.7 111.3 702.7 C111.3 702.7 127.5 671.1 132.6 660.8 C137.6 650.4 137.9 648.8 141.6 640.7 C145.3 632.7 150 625.5 154.6 612.6 C159.3 599.7 169.4 563.4 169.4 563.4 C169.4 563.4 166.6 562.6 166.6 562.6 Z"/>
<path d="M109.1 712.5 C109.1 712.5 111.1 717.3 112.7 719.9 C114.3 722.5 117 725.8 118.8 727.9 C120.6 730 123.4 732.5 123.4 732.5 C123.4 732.5 124.6 731.5 124.6 731.5 C124.6 731.5 122.7 728.3 121.2 726.1 C119.6 723.8 117.1 720.5 115.3 718.1 C113.6 715.7 110.9 711.5 110.9 711.5 C110.9 711.5 109.1 712.5 109.1 712.5 Z"/>
<path d="M137.4 738.7 C137.4 738.7 139.7 743.8 141.4 746.2 C143 748.6 145.3 751.7 147.3 753.1 C149.4 754.5 151.6 754.3 153.8 754.5 C156 754.6 160.5 754 160.5 754 C160.5 754 160.5 752 160.5 752 C160.5 752 156 751.9 154.2 751.5 C152.4 751.2 151.3 751.2 149.7 749.9 C148.1 748.6 146.3 745.9 144.6 743.8 C142.9 741.7 139.6 737.3 139.6 737.3 C139.6 737.3 137.4 738.7 137.4 738.7 Z"/>
<path d="M369.9 131 C369.9 131 379.9 132.1 384.8 132.7 C389.8 133.4 394.8 134.4 399.8 135 C404.8 135.6 410.8 136.2 414.9 136.2 C419.1 136.3 422.7 135 424.8 135.2 C426.8 135.5 427.3 137.7 427.3 137.7 C427.3 137.7 428.7 136.3 428.7 136.3 C428.7 136.3 427.5 133.4 425.2 132.8 C423 132.2 419.2 133 415.1 132.8 C410.9 132.5 405.2 131.6 400.2 131 C395.2 130.4 390.2 129.6 385.2 129.3 C380.1 128.9 370.1 129 370.1 129 C370.1 129 369.9 131 369.9 131 Z"/>
<path d="M430.9 139 C430.9 139 436.8 139.7 439.9 140 C443 140.3 446.4 140.2 449.6 141.1 C452.8 141.9 456.2 143.4 459.2 145 C462.2 146.7 465 148.5 467.6 151 C470.2 153.5 472.3 155.9 474.8 160 C477.3 164.2 479.7 169.6 482.7 175.9 C485.7 182.1 489.6 190.3 492.7 197.8 C495.7 205.3 498.2 214.1 501.2 220.8 C504.1 227.5 506.8 231.8 510.3 238 C513.8 244.2 518.5 250.8 522.2 257.9 C526 265 529.9 272.9 532.6 280.7 C535.3 288.4 536.9 296.5 538.5 304.4 C540.2 312.3 541.6 320.3 542.5 328.2 C543.4 336.2 543.9 343.9 544 352 C544.1 360.1 543.9 369.6 543.3 376.8 C542.6 384.1 541.4 389.9 540.3 395.7 C539.1 401.4 537.6 406.2 536.3 411.6 C535 416.9 533.7 422.3 532.5 427.7 C531.4 433 529.5 443.8 529.5 443.8 C529.5 443.8 531.5 444.2 531.5 444.2 C531.5 444.2 534.1 433.6 535.5 428.3 C536.8 423 538.3 417.8 539.7 412.4 C541.1 407.1 542.5 402.2 543.7 396.3 C544.9 390.5 546 384.6 546.7 377.2 C547.5 369.8 548 360.2 548 352 C548 343.7 547.4 335.8 546.5 327.8 C545.6 319.7 544.1 311.7 542.5 303.6 C540.8 295.5 539.2 287.3 536.4 279.3 C533.6 271.4 529.5 263.3 525.8 256.1 C522 248.9 517.2 242.2 513.7 236 C510.2 229.9 507.7 225.8 504.8 219.2 C501.9 212.6 499.4 203.7 496.3 196.2 C493.3 188.7 489.3 180.5 486.3 174.1 C483.3 167.8 480.9 162.3 478.2 158 C475.6 153.6 473.3 150.7 470.4 148 C467.5 145.4 464.1 143.6 460.8 142 C457.5 140.3 453.8 138.8 450.4 137.9 C446.9 137.1 443.3 137.2 440.1 137 C436.9 136.8 431.1 137 431.1 137 C431.1 137 430.9 139 430.9 139 Z"/>
<path d="M532.9 450.1 C532.9 450.1 534.5 449.6 535 452.4 C535.6 455.3 535.5 460.9 536 467.2 C536.5 473.5 537 481.4 538 490.2 C539 499.1 540.5 510.8 542 520.3 C543.6 529.8 545 538.5 547.3 547.4 C549.6 556.3 552.1 564.7 555.6 573.5 C559.1 582.4 564.1 592.2 568.5 600.5 C573 608.8 577 616.6 582.2 623.6 C587.3 630.6 593.7 637.7 599.4 642.7 C605.1 647.6 611.9 650.8 616.5 653.4 C621.2 656 627.4 658.4 627.4 658.4 C627.4 658.4 628.6 655.6 628.6 655.6 C628.6 655.6 622.1 654 617.5 651.6 C612.8 649.2 606.2 646.2 600.6 641.3 C595 636.5 588.8 629.4 583.8 622.4 C578.8 615.4 574.7 607.8 570.5 599.5 C566.2 591.2 561.7 581.3 558.4 572.5 C555.1 563.6 552.8 555.4 550.7 546.6 C548.6 537.8 547.4 529.2 546 519.7 C544.5 510.2 543 498.6 542 489.8 C541 481 540.5 473.2 540 466.8 C539.5 460.5 539.8 454.7 539 451.6 C538.1 448.4 535.1 447.9 535.1 447.9 C535.1 447.9 532.9 450.1 532.9 450.1 Z"/>
<path d="M417.3 146.3 C417.3 146.3 419 150.8 420.2 152.6 C421.3 154.3 424.3 156.7 424.3 156.7 C424.3 156.7 425.7 155.3 425.7 155.3 C425.7 155.3 423 153 421.8 151.4 C420.6 149.8 418.7 145.7 418.7 145.7 C418.7 145.7 417.3 146.3 417.3 146.3 Z"/>
<path d="M426.3 140.4 C426.3 140.4 429.4 145.2 430 147.3 C430.7 149.4 430.5 151.2 430 152.7 C429.6 154.3 427.4 156.6 427.4 156.6 C427.4 156.6 428.6 157.4 428.6 157.4 C428.6 157.4 431.4 155.1 432 153.3 C432.5 151.5 432.7 149 432 146.7 C431.2 144.4 427.7 139.6 427.7 139.6 C427.7 139.6 426.3 140.4 426.3 140.4 Z"/>
<path d="M398 156 L405 162 L410 168 L404 169 L406 176 L399 176 L392 190 L386 193 L380 189 L388 180 L393 172 L391 168 L396 164 Z"/>
<path d="M370 198 C371.8 196.3 377 198.3 378 200 C379 201.7 377.7 205 376 208 C374.3 211 370.7 214.5 368 218 C365.3 221.5 362 227.7 360 229 C358 230.3 355.7 227.8 356 226 C356.3 224.2 360.2 220.7 362 218 C363.8 215.3 365.7 213.3 367 210 C368.3 206.7 368.2 199.7 370 198 Z"/>
<path d="M361.7 215.2 C361.7 215.2 358.2 220.8 356.7 223.2 C355.3 225.6 353.2 229.4 353.2 229.4 C353.2 229.4 354.8 230.6 354.8 230.6 C354.8 230.6 357.7 227.1 359.3 224.8 C360.8 222.5 364.3 216.8 364.3 216.8 C364.3 216.8 361.7 215.2 361.7 215.2 Z"/>
<path d="M428.3 179.4 C428.3 179.4 429.8 184.1 431 187 C432.1 189.9 433.8 194 435.2 196.8 C436.5 199.5 439.3 203.3 439.3 203.3 C439.3 203.3 440.7 202.7 440.7 202.7 C440.7 202.7 439.8 198.2 438.8 195.2 C437.9 192.3 436.6 187.8 435 185 C433.5 182.3 429.7 178.6 429.7 178.6 C429.7 178.6 428.3 179.4 428.3 179.4 Z"/>
<path d="M236.3 265.1 C236.3 265.1 238.4 260.1 239.8 257.8 C241.2 255.5 242.8 253.4 244.8 251.4 C246.8 249.4 249.4 247.6 251.8 245.7 C254.2 243.9 256.6 242 259.2 240.2 C261.9 238.4 264.2 237 267.8 235.1 C271.3 233.1 276.5 230.3 280.6 228.4 C284.7 226.5 292.2 223.7 292.2 223.7 C292.2 223.7 291.8 222.3 291.8 222.3 C291.8 222.3 283.7 224 279.4 225.6 C275.2 227.2 270 230.2 266.2 231.9 C262.4 233.6 259.8 234.4 256.8 235.8 C253.8 237.2 251.1 238.6 248.2 240.3 C245.3 241.9 241.7 243.3 239.2 245.6 C236.7 247.9 234.6 251.3 233.2 254.2 C231.8 257.1 230.7 262.9 230.7 262.9 C230.7 262.9 236.3 265.1 236.3 265.1 Z"/>
<path d="M283.6 236.9 C283.6 236.9 288.2 239.5 290.6 240 C293.1 240.4 295.8 240.2 298.3 239.7 C300.8 239.3 303.4 238.4 305.7 237.4 C308 236.4 312 233.6 312 233.6 C312 233.6 311 231.4 311 231.4 C311 231.4 306.5 233 304.3 233.6 C302.1 234.3 299.8 235 297.7 235.3 C295.5 235.5 293.6 235.2 291.4 235 C289.1 234.8 284.4 234.1 284.4 234.1 C284.4 234.1 283.6 236.9 283.6 236.9 Z"/>
<path d="M316.4 239.2 C316.4 239.2 322.2 238.4 324.9 237 C327.5 235.6 329.9 233.5 332.4 230.9 C334.9 228.4 339.7 221.7 339.7 221.7 C339.7 221.7 338.3 220.3 338.3 220.3 C338.3 220.3 332.1 225.8 329.6 228.1 C327.1 230.3 325.5 232.5 323.1 234 C320.8 235.4 315.6 236.8 315.6 236.8 C315.6 236.8 316.4 239.2 316.4 239.2 Z"/>
<path d="M199.3 287.9 C199.3 287.9 197.7 302.1 197 309.9 C196.3 317.7 195.3 327.4 195 334.9 C194.7 342.5 195 349.7 195.3 355 C195.5 360.4 196.8 367.1 196.8 367.1 C196.8 367.1 198.2 366.9 198.2 366.9 C198.2 366.9 197.8 360.3 197.7 355 C197.7 349.6 197.6 342.5 198 335.1 C198.4 327.6 199.5 317.9 200 310.1 C200.5 302.3 200.7 288.1 200.7 288.1 C200.7 288.1 199.3 287.9 199.3 287.9 Z"/>
<path d="M212.6 265.9 C212.6 265.9 209.8 278.9 208.5 286.7 C207.3 294.5 206 304.7 205 312.7 C204 320.7 202.8 328.3 202.5 334.9 C202.2 341.5 202.9 346.3 203.3 352.2 C203.6 358.1 204.3 365.2 204.8 370.4 C205.2 375.5 205.6 376.6 206 383.3 C206.4 389.9 206.5 399.1 207.3 410.3 C208 421.5 209.4 441.2 210.3 450.4 C211.3 459.7 211.8 460.8 212.9 465.9 C213.9 471 215.3 475.2 216.9 481.1 C218.4 486.9 220.2 494.4 222.1 501.1 C224.1 507.7 226.5 514.8 228.7 521.1 C230.9 527.3 233.1 532.6 235.4 538.8 C237.6 545.1 239.9 551.6 242.1 558.5 C244.3 565.5 246.6 573.8 248.6 580.4 C250.5 587 254 598.3 254 598.3 C254 598.3 256 597.7 256 597.7 C256 597.7 253.1 586.3 251.4 579.6 C249.8 572.9 247.7 564.5 245.9 557.5 C244.1 550.4 242.4 543.6 240.6 537.2 C238.9 530.8 237.1 525.3 235.3 518.9 C233.5 512.6 231.6 505.6 229.9 498.9 C228.2 492.3 226.6 484.8 225.1 478.9 C223.7 473.1 222.3 469 221.1 464.1 C220 459.2 219.3 458.6 218.3 449.6 C217.2 440.5 215.6 420.9 214.7 409.7 C213.9 398.6 213.6 389.4 213 382.7 C212.4 376.1 211.9 374.8 211.2 369.6 C210.5 364.5 209.4 357.5 208.7 351.8 C208.1 346 207.3 341.5 207.5 335.1 C207.7 328.7 209 321.3 210 313.3 C211 305.3 212.8 295.2 213.5 287.3 C214.2 279.4 214 266.1 214 266.1 C214 266.1 212.6 265.9 212.6 265.9 Z"/>
<path d="M220.6 276.9 C220.6 276.9 217.8 291 217 299.9 C216.2 308.7 216 321.6 216 330 C216 338.4 216.1 344.1 216.8 350.2 C217.4 356.2 218.7 362 219.8 366.3 C220.8 370.7 223 376.2 223 376.2 C223 376.2 225 375.8 225 375.8 C225 375.8 223.8 370 223.2 365.7 C222.6 361.3 221.6 355.8 221.2 349.8 C220.9 343.9 220.9 338.3 221 330 C221.1 321.7 221.8 309 222 300.1 C222.2 291.3 222 277.1 222 277.1 C222 277.1 220.6 276.9 220.6 276.9 Z"/>
<path d="M228 269.9 C228 269.9 226.1 288.3 225.5 299.9 C224.8 311.6 224.3 329.1 224.1 340 C223.8 350.8 223.6 357.5 223.8 365.1 C223.9 372.7 224.2 379.5 224.8 385.4 C225.4 391.3 226.2 394.2 227.3 400.6 C228.4 407 229.7 415.4 231.3 423.8 C233 432.2 235.1 443.3 237.4 451.2 C239.7 459.2 242.5 464.8 245 471.4 C247.5 478.1 249.5 484.2 252.3 491.4 C255 498.6 258.1 507.9 261.4 514.7 C264.7 521.6 267.6 527.3 272.1 532.4 C276.6 537.5 283.3 542.3 288.3 545.5 C293.3 548.6 297.9 549.9 302.1 551.3 C306.3 552.7 313.5 553.9 313.5 553.9 C313.5 553.9 314.5 550.1 314.5 550.1 C314.5 550.1 307.7 548.3 303.9 546.7 C300.1 545.1 296 543.7 291.7 540.5 C287.4 537.3 281.7 532.5 277.9 527.6 C274 522.7 271.6 517.8 268.6 511.3 C265.6 504.8 262.4 495.7 259.7 488.6 C257.1 481.5 255.4 475.2 253 468.6 C250.6 461.9 248 456.5 245.6 448.8 C243.2 441.1 240.6 430.4 238.7 422.2 C236.7 414 235.1 405.6 233.7 399.4 C232.3 393.1 231.3 390.4 230.2 384.6 C229.1 378.9 227.9 372.3 227.2 364.9 C226.6 357.5 226.4 350.8 226.5 340 C226.7 329.2 227.4 311.7 227.9 300.1 C228.5 288.4 230 270.1 230 270.1 C230 270.1 228 269.9 228 269.9 Z"/>
<path d="M311.9 553 C311.9 553 319.8 554.1 324.3 553.5 C328.7 552.8 334.2 550.8 338.6 549.1 C343 547.5 345.3 546.1 350.7 543.4 C356 540.8 364 536.9 370.7 533.3 C377.4 529.8 385.7 525.2 390.7 522.3 C395.8 519.5 395.8 519.6 400.8 516.2 C405.8 512.9 415.2 506 420.8 502.2 C426.4 498.3 430.2 495.4 434.6 493.3 C439.1 491.1 447.4 489.4 447.4 489.4 C447.4 489.4 446.6 486.6 446.6 486.6 C446.6 486.6 437.9 488.5 433.4 490.7 C428.8 493 424.9 496 419.2 499.8 C413.5 503.7 404.2 510.4 399.2 513.8 C394.2 517.1 394.2 516.9 389.3 519.7 C384.3 522.5 376 527.2 369.3 530.7 C362.6 534.1 354.6 538 349.3 540.6 C344 543.1 341.7 544.4 337.4 545.9 C333.1 547.3 328 549 323.7 549.5 C319.5 550 312.1 549 312.1 549 C312.1 549 311.9 553 311.9 553 Z"/>
<path d="M312.8 552 C312.8 552 314.8 552.8 316.4 557.9 C318 563 320.2 573 322.3 582.6 C324.5 592.2 327.1 606 329.3 615.6 C331.5 625.3 333.8 632.9 335.7 640.5 C337.5 648.1 340.3 661.3 340.3 661.3 C340.3 661.3 343.7 660.7 343.7 660.7 C343.7 660.7 341.9 647.2 340.3 639.5 C338.8 631.8 336.8 624.1 334.7 614.4 C332.6 604.7 329.9 591.1 327.7 581.4 C325.5 571.7 323.7 561.3 321.6 556.1 C319.5 550.9 315.2 550 315.2 550 C315.2 550 312.8 552 312.8 552 Z"/>
<path d="M211 450.1 C211 450.1 211.8 470.1 212.5 480.1 C213.3 490.1 214.1 500.2 215.5 510.2 C216.9 520.2 218.9 530.6 220.8 540.2 C222.7 549.9 227 568.2 227 568.2 C227 568.2 229 567.8 229 567.8 C229 567.8 225 549.4 223.2 539.8 C221.5 530.1 219.8 519.8 218.5 509.8 C217.2 499.8 216.4 489.9 215.5 479.9 C214.6 469.9 213 449.9 213 449.9 C213 449.9 211 450.1 211 450.1 Z"/>
<path d="M203 484.1 C203 484.1 202.6 494.2 202.8 500.2 C202.9 506.3 203.5 513.6 204 520.3 C204.6 526.9 205.1 531.9 206 540.3 C206.9 548.7 207.6 560.4 209.3 570.4 C210.9 580.5 213 590.5 215.8 600.6 C218.7 610.6 222.2 620.6 226.4 630.6 C230.5 640.7 235.6 651.7 240.7 660.7 C245.8 669.7 252.5 678.4 257 684.7 C261.4 691 267.4 698.4 267.4 698.4 C267.4 698.4 268.6 697.6 268.6 697.6 C268.6 697.6 263.2 689.7 259 683.3 C254.8 676.9 248.2 668.3 243.3 659.3 C238.4 650.3 233.5 639.3 229.6 629.4 C225.8 619.4 222.7 609.4 220.2 599.4 C217.7 589.5 216.1 579.5 214.7 569.6 C213.4 559.6 212.8 548 212 539.7 C211.2 531.4 210.6 526.4 210 519.7 C209.4 513.1 209.1 505.7 208.2 499.8 C207.4 493.8 205 483.9 205 483.9 C205 483.9 203 484.1 203 484.1 Z"/>
<path d="M171.1 564.4 C171.1 564.4 177.3 578.9 179.7 585.1 C182.2 591.2 183.9 595.9 186 601.3 C188.1 606.7 189.8 610 192.5 617.4 C195.2 624.7 199.7 637.1 202.2 645.2 C204.6 653.2 206 659 207.3 665.7 C208.6 672.4 209.2 678.8 210 685.3 C210.8 691.9 211.5 698.5 212 705.1 C212.5 711.7 212.8 720 213 724.9 C213.2 729.9 213 734.9 213 734.9 C213 734.9 215 735.1 215 735.1 C215 735.1 216.5 730.1 217 725.1 C217.5 720 218 711.6 218 704.9 C218 698.2 217.5 691.4 217 684.7 C216.4 677.9 215.9 671.3 214.7 664.3 C213.5 657.4 212.4 651.1 209.8 642.8 C207.3 634.5 202.5 622 199.5 614.6 C196.5 607.3 194.5 604 192 598.7 C189.4 593.4 187.4 588.8 184.3 582.9 C181.1 577.1 172.9 563.6 172.9 563.6 C172.9 563.6 171.1 564.4 171.1 564.4 Z"/>
<path d="M223.3 540.2 C223.3 540.2 227.1 553.6 229 560.3 C231 567 233.2 573.6 235 580.3 C236.9 586.9 240.3 600.2 240.3 600.2 C240.3 600.2 241.7 599.8 241.7 599.8 C241.7 599.8 238.8 586.4 237 579.7 C235.2 573.1 233 566.4 231 559.7 C228.9 553.1 224.7 539.8 224.7 539.8 C224.7 539.8 223.3 540.2 223.3 540.2 Z"/>
<path d="M243.3 540.3 C243.3 540.3 245.7 546.9 247.1 550.4 C248.4 553.9 251.3 561.3 251.3 561.3 C251.3 561.3 252.7 560.7 252.7 560.7 C252.7 560.7 250.3 553.1 248.9 549.6 C247.6 546.1 244.7 539.7 244.7 539.7 C244.7 539.7 243.3 540.3 243.3 540.3 Z"/>
<path d="M259.3 574.3 C259.3 574.3 261.5 579.7 262.9 582.5 C264.2 585.4 267.3 591.3 267.3 591.3 C267.3 591.3 268.7 590.7 268.7 590.7 C268.7 590.7 266.5 584.3 265.1 581.5 C263.8 578.6 260.7 573.7 260.7 573.7 C260.7 573.7 259.3 574.3 259.3 574.3 Z"/>
<path d="M274.3 676.3 C274.3 676.3 278.6 686.5 281.2 690.5 C283.7 694.6 289.4 700.5 289.4 700.5 C289.4 700.5 290.6 699.5 290.6 699.5 C290.6 699.5 285.3 693.4 282.8 689.5 C280.4 685.5 275.7 675.7 275.7 675.7 C275.7 675.7 274.3 676.3 274.3 676.3 Z"/>
<path d="M402.7 240 C402.7 240 411.3 236 414.7 234.7 C418.1 233.4 420.3 232.3 423 232 C425.7 231.7 428.9 231.4 430.7 232.7 C432.4 234 433.5 237.9 433.5 240 C433.5 242.1 432.3 244.2 430.7 245.3 C429.1 246.4 425.8 245.8 424 246.7 C422.2 247.6 422 249.1 420 250.7 C418 252.3 412 256.5 412 256.5 C412 256.5 409.4 256.3 410.5 254.7 C411.6 253.1 416.7 248.7 418.7 246.7 C420.7 244.7 423.6 243.6 422.7 242.7 C421.8 241.8 416.6 241.9 413.3 241.5 C410 241.1 402.7 240 402.7 240 Z"/>
<path d="M404.4 251.6 C404.4 251.6 408.3 249.7 410.6 248.6 C412.8 247.5 417.9 244.9 417.9 244.9 C417.9 244.9 417.1 243.1 417.1 243.1 C417.1 243.1 411.7 245.2 409.4 246.4 C407.2 247.6 403.6 250.4 403.6 250.4 C403.6 250.4 404.4 251.6 404.4 251.6 Z"/>
<path d="M420 268.7 C420 268.7 419.3 262.9 421.3 261.5 C423.3 260.1 428.4 260.3 432 260 C435.6 259.7 440.4 259.1 442.7 259.5 C445 259.9 447.1 261.8 446 262.7 C444.9 263.6 438.7 264.2 436 265 C433.3 265.8 431.8 266.7 430 267.5 C428.2 268.3 427 269.6 425.3 269.8 C423.6 270 420 268.7 420 268.7 Z"/>
<path d="M436 273.3 C436 273.3 441.9 272.9 445 272.8 C448.1 272.8 452.4 272.5 454.7 273 C457 273.5 459 276 459 276 C459 276 455.4 277.3 452 277.6 C448.6 277.9 441.4 278.3 438.7 277.6 C436 276.9 436 273.3 436 273.3 Z"/>
<path d="M442.7 294.7 C442.7 294.7 447.4 291.4 450.7 291.5 C454 291.6 458.9 293.2 462.7 295.5 C466.5 297.8 471 302.7 473.3 305 C475.6 307.3 476.5 309.5 476.5 309.5 C476.5 309.5 470.8 308.3 468 307 C465.2 305.7 463.1 303.2 460 301.8 C456.9 300.4 452.2 300.1 449.3 298.9 C446.4 297.7 442.7 294.7 442.7 294.7 Z"/>
<path d="M458.7 305 C458.7 305 463.5 307.8 466 309.5 C468.5 311.2 472.5 313.9 473.5 315.5 C474.5 317.1 472 319 472 319 C472 319 463.5 314.8 461.3 312.5 C459.1 310.2 458.7 305 458.7 305 Z"/>
<path d="M458.5 321 C458.5 321 462.7 320 465.3 320.8 C467.9 321.6 471.3 324.2 474 326 C476.7 327.8 478.8 329 481.5 331.5 C484.2 334 487.2 338 490 341 C492.8 344 495.3 346.8 498 349.5 C500.7 352.2 503.8 354.6 506 357 C508.2 359.4 509.8 361.2 511 364 C512.2 366.8 512.8 370.7 513 374 C513.2 377.3 513 380.8 512.5 384 C512 387.2 511.6 390 510 393 C508.4 396 505.3 399.3 503 402 C500.7 404.7 498.3 407 496 409 C493.7 411 490.8 412.9 489 414 C487.2 415.1 485 415.5 485 415.5 C485 415.5 484 411.5 484 411.5 C484 411.5 487.2 408.1 489 406 C490.8 403.9 493.2 401.5 495 399 C496.8 396.5 498.7 393.7 500 391 C501.3 388.3 502.3 385.8 503 383 C503.7 380.2 504.5 377.5 504 374 C503.5 370.5 502.3 365.4 500 362 C497.7 358.6 493.6 356.7 490 353.5 C486.4 350.3 482.6 346.4 478.7 343 C474.8 339.6 469.8 336 466.7 333.3 C463.6 330.6 461.4 328.8 460 326.7 C458.6 324.6 458.5 321 458.5 321 Z"/>
<path d="M473.6 272.2 C473.6 272.2 476.6 278.4 478.1 281.5 C479.7 284.5 480.8 285.7 482.9 290.5 C485 295.3 488.4 304.2 490.7 310.5 C493 316.8 495.2 323.2 496.8 328.3 C498.3 333.4 500 341.1 500 341.1 C500 341.1 501 340.9 501 340.9 C501 340.9 500.5 332.9 499.2 327.7 C497.9 322.4 495.7 315.9 493.3 309.5 C491 303.2 487.4 294.3 485.1 289.5 C482.9 284.7 481.7 283.5 479.9 280.5 C478.1 277.6 474.4 271.8 474.4 271.8 C474.4 271.8 473.6 272.2 473.6 272.2 Z"/>
<path d="M519.3 276.1 C519.3 276.1 519.8 280.9 520.3 284.2 C520.8 287.5 522.3 296.1 522.3 296.1 C522.3 296.1 523.7 295.9 523.7 295.9 C523.7 295.9 523.2 287.2 522.7 283.8 C522.2 280.5 520.7 275.9 520.7 275.9 C520.7 275.9 519.3 276.1 519.3 276.1 Z"/>
<path d="M229.5 328.5 C229.5 328.5 230.9 324.5 232 323 C233.1 321.5 234.7 319.7 236 319.5 C237.3 319.3 238.2 321.5 240 322 C241.8 322.5 245.2 322.2 247 322.5 C248.8 322.8 249.7 323.5 251 323.5 C252.3 323.5 253.5 322.7 255 322.5 C256.5 322.3 258.1 322 260 322.5 C261.9 323 263.8 324.6 266.5 325.5 C269.2 326.4 274.2 327 276 328 C277.8 329 277.5 330.4 277 331.5 C276.5 332.6 275 334.1 273 334.5 C271 334.9 267.8 334.2 265 334 C262.2 333.8 258.2 334.1 256 333.5 C253.8 332.9 253.2 331.5 252 330.5 C250.8 329.5 250.3 328.4 249 327.5 C247.7 326.6 245.8 325.5 244 325 C242.2 324.5 240 324.4 238.5 324.5 C237 324.6 235.9 324.8 235 325.5 C234.1 326.2 233.9 328.5 233 329 C232.1 329.5 229.5 328.5 229.5 328.5 Z"/>
<path d="M230.5 353.5 C230.5 353.5 232 350.7 233 349.5 C234 348.3 235.2 347.3 236.5 346.5 C237.8 345.7 239.2 344.9 241 344.5 C242.8 344.1 245 344 247 343.8 C249 343.6 250.7 343.5 253 343.5 C255.3 343.5 258.4 343.6 261 343.8 C263.6 344 266.7 344.3 268.5 344.8 C270.3 345.3 270.8 346.1 272 347 C273.2 347.9 274.3 349.2 275.5 350.5 C276.7 351.8 277.9 352.9 279 354.5 C280.1 356.1 282 360 282 360 C282 360 280 360.1 279 359.5 C278 358.9 277.1 357.6 276 356.5 C274.9 355.4 273.5 353.7 272.5 353 C271.5 352.3 270.5 352 270 352.5 C269.5 353 269.8 354.8 269.5 356 C269.2 357.2 268.8 359 268 360 C267.2 361 267 361.6 265 362 C263 362.4 258.8 362.5 256 362.5 C253.2 362.5 249.5 362.6 248 362 C246.5 361.4 247.4 360.3 247 359 C246.6 357.7 246 355.6 245.5 354 C245 352.4 244.8 350.3 244 349.5 C243.2 348.7 242.2 348.7 241 349 C239.8 349.3 238.2 350.6 237 351.5 C235.8 352.4 235.1 354.2 234 354.5 C232.9 354.8 230.5 353.5 230.5 353.5 Z"/>
<path d="M233 361.5 C233 361.5 235 365.3 236.6 366.5 C238.3 367.8 240.5 368.5 242.7 369 C244.9 369.5 247.3 369.7 250 369.5 C252.7 369.3 259.1 368.1 259.1 368.1 C259.1 368.1 258.9 366.9 258.9 366.9 C258.9 366.9 252.6 367.6 250 367.5 C247.4 367.4 245.2 367.2 243.3 366.6 C241.4 366 239.9 365.1 238.4 364.1 C236.8 363.1 234 360.5 234 360.5 C234 360.5 233 361.5 233 361.5 Z"/>
<path d="M342.5 320 C342.5 320 343.2 316.5 344 315 C344.8 313.5 346.4 312 347.5 311 C348.6 310 349.6 309.1 350.5 309 C351.4 308.9 352.1 310.2 353 310.5 C353.9 310.8 354.8 311.2 356 311 C357.2 310.8 358.7 309.4 360 309 C361.3 308.6 362.7 308.6 364 308.5 C365.3 308.4 366.7 308.1 368 308.5 C369.3 308.9 370.7 310 372 311 C373.3 312 375.7 313.5 376 314.5 C376.3 315.5 374.9 316.3 374 317 C373.1 317.7 371.8 318.4 370.5 318.7 C369.2 318.9 367.4 318.3 366 318.5 C364.6 318.7 363.3 319.6 362 320 C360.7 320.4 359.2 320.3 358 321 C356.8 321.7 356 323.7 355 324 C354 324.3 353 323.4 352 323 C351 322.6 349.8 321.3 349 321.5 C348.2 321.7 347.6 323.1 347 324 C346.4 324.9 346.2 327.7 345.5 327 C344.8 326.3 342.5 320 342.5 320 Z"/>
<path d="M380 316 a2.3 2.3 0 1 0 4.6 0 a2.3 2.3 0 1 0 -4.6 0 Z"/>
<path d="M391 318 a2.8 2.6 0 1 0 5.6 0 a2.8 2.6 0 1 0 -5.6 0 Z"/>
<path d="M402 326 a3 2.6 0 1 0 6 0 a3 2.6 0 1 0 -6 0 Z"/>
<path d="M339.8 340.5 C339.8 340.5 345.3 339.2 348 338.5 C350.7 337.8 353.8 337 356 336.3 C358.2 335.6 359.3 334.7 361 334.5 C362.7 334.3 364.7 335.3 366 335 C367.3 334.7 367.8 333.4 369 332.5 C370.2 331.6 373 329.8 373 329.8 C373 329.8 372.3 332.5 372 333.5 C371.7 334.5 370.3 335.3 371 336 C371.7 336.7 374 336.7 376 337.5 C378 338.3 380.7 340 383 341 C385.3 342 387.8 342.4 390 343.5 C392.2 344.6 394.3 346.1 396 347.5 C397.7 348.9 398.8 350.3 400 352 C401.2 353.7 403.5 357.5 403.5 357.5 C403.5 357.5 400 355.7 399 355.5 C398 355.3 398.5 355.8 397.5 356.5 C396.5 357.2 394.9 358.6 393 359.8 C391.1 361 388.5 362.6 386 363.5 C383.5 364.4 380.7 364.9 378 365.2 C375.3 365.5 372.7 365.4 370 365.2 C367.3 365 364.5 364.7 362 364.2 C359.5 363.7 357.7 362.7 355 362 C352.3 361.3 349 361.1 346 359.8 C343 358.6 337 354.5 337 354.5 C337 354.5 338.7 352.3 340 351.5 C341.3 350.7 343.2 350.2 345 349.5 C346.8 348.8 350.8 347.7 351 347 C351.2 346.3 347.7 345.8 346 345.2 C344.3 344.6 342 344.3 341 343.5 C340 342.7 339.8 340.5 339.8 340.5 Z"/>
<path d="M270 422.5 L273.5 424 L278.5 428.5 L274 429 L271.5 426 Z"/>
<path d="M295.5 432 L299 427 L303.5 422 L306.5 423.5 L309.5 427 L308.5 431.5 L303 431.5 Z"/>
<path d="M311.5 432 C311.5 432 313.1 429.3 314 428.5 C314.9 427.7 316 427.9 317 427 C318 426.1 319.1 424.2 320 423 C320.9 421.8 322.5 420 322.5 420 C322.5 420 324.8 423.4 324.7 425 C324.6 426.6 323.1 428.7 322 429.5 C320.9 430.3 319.2 429.8 318 430 C316.8 430.2 316.1 430.2 315 430.5 C313.9 430.8 311.5 432 311.5 432 Z"/>
<path d="M271.6 479.1 C271.6 479.1 273.8 476.1 275.1 474.9 C276.3 473.7 277.4 472.7 279 471.7 C280.6 470.8 282.6 469.9 284.5 469.2 C286.4 468.5 290.2 467.6 290.2 467.6 C290.2 467.6 289.8 465.4 289.8 465.4 C289.8 465.4 285.6 465.3 283.5 465.8 C281.4 466.3 278.9 467.2 277 468.3 C275.1 469.3 273.2 470.5 271.9 472.1 C270.7 473.7 269.4 477.9 269.4 477.9 C269.4 477.9 271.6 479.1 271.6 479.1 Z"/>
<path d="M291.8 470.5 C291.8 470.5 295.4 469.8 297.4 469.5 C299.3 469.3 301.2 469.2 303.7 469 C306.1 468.8 309.3 468.6 312 468.5 C314.7 468.4 317.2 468.3 319.8 468.5 C322.4 468.7 325.4 469.4 327.7 469.7 C330 470 333.8 470.4 333.8 470.4 C333.8 470.4 334.2 468.6 334.2 468.6 C334.2 468.6 330.6 467.3 328.3 466.7 C325.9 466.1 322.9 465.4 320.2 465.1 C317.5 464.7 314.8 464.5 312 464.5 C309.2 464.5 305.9 464.7 303.3 465 C300.8 465.3 298.7 465.5 296.6 466.1 C294.6 466.7 291.2 468.5 291.2 468.5 C291.2 468.5 291.8 470.5 291.8 470.5 Z"/>
<path d="M283.3 478.2 C283.3 478.2 288.2 480.1 290.7 480.7 C293.1 481.3 295.7 481.6 297.9 481.7 C300.2 481.9 302.4 481.9 304.4 481.5 C306.3 481.1 307.8 480.3 309.7 479.5 C311.5 478.7 313.6 477.3 315.5 476.7 C317.4 476 319.2 476 321.3 475.5 C323.3 475 327.7 473.8 327.7 473.8 C327.7 473.8 327.3 471.8 327.3 471.8 C327.3 471.8 322.9 472.3 320.7 472.5 C318.6 472.8 316.6 472.8 314.5 473.3 C312.4 473.8 310.1 475.1 308.3 475.5 C306.5 476 305.3 476 303.6 476.1 C301.9 476.2 300.1 476.2 298.1 476.3 C296 476.3 293.7 476.4 291.3 476.3 C288.9 476.2 283.7 475.8 283.7 475.8 C283.7 475.8 283.3 478.2 283.3 478.2 Z"/>
<path d="M277.7 491.5 C277.7 491.5 281.7 493.9 284.7 494.6 C287.8 495.3 292.6 495.5 296 495.5 C299.5 495.5 302.2 495.1 305.3 494.7 C308.4 494.3 311.6 493.9 314.5 493.2 C317.4 492.6 320.4 491.7 322.8 490.6 C325.3 489.6 327.3 488.5 329.1 487.2 C330.9 485.8 333.8 482.5 333.8 482.5 C333.8 482.5 332.2 480.5 332.2 480.5 C332.2 480.5 328.8 482.8 326.9 483.8 C325.1 484.8 323.4 485.5 321.2 486.4 C318.9 487.2 316.3 488.2 313.5 488.8 C310.8 489.3 307.6 489.4 304.7 489.7 C301.8 490 299.2 490.4 296 490.5 C292.7 490.6 288.2 490.6 285.3 490.4 C282.3 490.3 278.3 489.5 278.3 489.5 C278.3 489.5 277.7 491.5 277.7 491.5 Z"/>
<path d="M474.3 411.8 C474.3 411.8 471.2 422 469.5 427.6 C467.9 433.2 466.4 440.2 464.6 445.5 C462.8 450.8 460.6 455.5 458.9 459.5 C457.2 463.5 454.3 469.7 454.3 469.7 C454.3 469.7 455.7 470.3 455.7 470.3 C455.7 470.3 459.2 464.5 461.1 460.5 C463.1 456.5 465.5 451.8 467.4 446.5 C469.3 441.1 471.1 434.1 472.5 428.4 C473.8 422.7 475.7 412.2 475.7 412.2 C475.7 412.2 474.3 411.8 474.3 411.8 Z"/>
<path d="M478 434 C480.7 430.7 486.3 426.5 490 424 C493.7 421.5 497.5 419.7 500 419 C502.5 418.3 503.8 418.5 505 420 C506.2 421.5 506.5 425.3 507 428 C507.5 430.7 508.8 432.7 508 436 C507.2 439.3 504 444 502 448 C500 452 498 456 496 460 C494 464 492 468 490 472 C488 476 486.3 480 484 484 C481.7 488 478.7 492.7 476 496 C473.3 499.3 470.3 501.3 468 504 C465.7 506.7 464 509.3 462 512 C460 514.7 458 516.7 456 520 C454 523.3 451.7 528.7 450 532 C448.3 535.3 447.7 537 446 540 C444.3 543 442.3 546.7 440 550 C437.7 553.3 434.7 556.7 432 560 C429.3 563.3 424 570 424 570 C424 570 419.7 568.7 420 566 C420.3 563.3 424 558.3 426 554 C428 549.7 430.3 544.3 432 540 C433.7 535.7 435 531.3 436 528 C437 524.7 439 521.7 438 520 C437 518.3 430 518 430 518 C430 518 433.7 510 436 506 C438.3 502 441.3 496.7 444 494 C446.7 491.3 449.3 491 452 490 C454.7 489 458 490.3 460 488 C462 485.7 463 479.7 464 476 C465 472.3 465 470 466 466 C467 462 468.7 455.7 470 452 C471.3 448.3 472.7 447 474 444 C475.3 441 475.3 437.3 478 434 Z"/>
<path d="M443.8 538.8 C443.8 538.8 437.8 549.2 434.8 554.8 C431.8 560.5 428.5 567.5 425.8 572.8 C423 578.2 420.2 583.1 418.3 587 C416.3 590.9 415.6 592.8 413.9 596.4 C412.2 600 409.8 604.5 408.1 608.6 C406.3 612.6 403.4 620.8 403.4 620.8 C403.4 620.8 404.6 621.2 404.6 621.2 C404.6 621.2 408 613.4 409.9 609.4 C411.8 605.5 414.1 601 416.1 597.6 C418.1 594.2 419.4 592.7 421.7 589 C424.1 585.2 427.3 580.5 430.2 575.2 C433.1 569.9 436.2 562.8 439.2 557.2 C442.2 551.5 448.2 541.2 448.2 541.2 C448.2 541.2 443.8 538.8 443.8 538.8 Z"/>
<path d="M501.2 423.1 C501.2 423.1 495.4 436.5 492.3 443.2 C489.3 449.8 486.2 455.4 482.9 462.9 C479.7 470.4 475.9 478.9 472.8 488.2 C469.7 497.5 466.3 508.7 464.1 518.9 C461.9 529.1 460.7 540.1 459.5 549.4 C458.4 558.7 457.7 566.2 457 574.6 C456.3 583 456.1 591.3 455.5 599.6 C454.9 607.9 454 616.3 453.5 624.6 C453 633 452.6 640.6 452.5 649.9 C452.4 659.1 452.9 669.9 453 680 C453.1 690 452.9 700.8 453.3 710 C453.6 719.2 455 735.1 455 735.1 C455 735.1 458 734.9 458 734.9 C458 734.9 457.6 719.1 457.7 710 C457.9 700.8 458.5 690 459 680 C459.5 670.1 459.9 659.3 460.5 650.1 C461.1 641 461.7 633.6 462.5 625.4 C463.3 617.1 464.7 608.7 465.5 600.4 C466.2 592.1 466.3 583.7 467 575.4 C467.6 567.1 468.3 559.7 469.5 550.6 C470.6 541.6 471.6 530.9 473.9 521.1 C476.2 511.3 480 500.8 483.2 491.8 C486.4 482.8 490 474.6 493.1 467.1 C496.1 459.6 499.4 453.8 501.7 446.8 C504 439.8 506.8 424.9 506.8 424.9 C506.8 424.9 501.2 423.1 501.2 423.1 Z"/>
<path d="M495.5 461.6 C495.5 461.6 489.9 476.4 488.1 484.4 C486.2 492.4 485.5 500.9 484.5 509.7 C483.6 518.4 482.8 527.6 482.3 536.8 C481.8 546 481.6 556.1 481.5 565 C481.4 573.8 481.7 583.3 481.5 590 C481.3 596.7 480.4 596.7 480.5 605.1 C480.6 613.5 480.8 627.8 482 640.3 C483.3 652.9 486.3 667.1 488 680.5 C489.7 693.8 491.2 709.6 492.3 720.4 C493.3 731.2 493.8 737.8 494.5 745.2 C495.2 752.7 496 760.1 496.5 765 C497 770 497.3 774.9 497.3 774.9 C497.3 774.9 499.7 775.1 499.7 775.1 C499.7 775.1 501.2 770 501.5 765 C501.8 759.9 501.8 752.3 501.5 744.8 C501.2 737.2 500.8 730.5 499.7 719.6 C498.6 708.8 496.8 692.9 495 679.5 C493.2 666.2 490.2 652.1 489 639.7 C487.7 627.2 487.9 613.2 487.5 604.9 C487.1 596.6 486.7 596.6 486.5 590 C486.3 583.4 486.3 573.9 486.5 565 C486.7 556.2 487.1 546.3 487.7 537.2 C488.4 528.1 489.4 518.9 490.5 510.3 C491.5 501.7 492.6 493.6 493.9 485.6 C495.3 477.6 498.5 462.4 498.5 462.4 C498.5 462.4 495.5 461.6 495.5 461.6 Z"/>
<path d="M513.3 395.9 C513.3 395.9 511.5 403.5 510.6 409.8 C509.6 416.1 508.7 425.9 507.8 433.7 C506.9 441.6 506.1 450.1 505.1 456.6 C504.1 463.1 502.4 466.2 501.8 472.6 C501.1 478.9 501.3 487 501.3 494.9 C501.2 502.8 501.4 512.5 501.5 520 C501.6 527.5 501.8 531.6 501.8 540 C501.7 548.3 501 560 501 570 C501 580.1 501.2 591.9 502 600.3 C502.9 608.8 504.4 614 506.1 620.7 C507.8 627.5 509.8 633.9 512.2 640.9 C514.5 648 517.5 656.4 520.2 663.1 C522.9 669.8 525.7 675.9 528.3 681.3 C530.9 686.6 533.5 691.2 535.8 695.1 C538 699 541.7 704.7 541.7 704.7 C541.7 704.7 544.3 703.3 544.3 703.3 C544.3 703.3 542 697 540.2 692.9 C538.5 688.8 536.1 684.1 533.7 678.7 C531.3 673.4 528.4 667.5 525.8 660.9 C523.1 654.3 520.2 646 517.8 639.1 C515.5 632.1 513.6 625.8 511.9 619.3 C510.3 612.7 509 607.9 508 599.7 C507 591.5 506.3 579.9 506 570 C505.7 560 506.2 548.3 506.2 540 C506.3 531.7 506.3 527.5 506.5 520 C506.7 512.5 507.1 502.9 507.7 495.1 C508.4 487.4 509.5 479.7 510.2 473.4 C510.9 467.2 511.4 463.9 511.9 457.4 C512.4 450.9 512.7 442.1 513.2 434.3 C513.8 426.4 514.8 416.6 515 410.2 C515.3 403.8 514.7 396.1 514.7 396.1 C514.7 396.1 513.3 395.9 513.3 395.9 Z"/>
<path d="M515.8 450 C515.8 450 514.6 461.6 514 469.9 C513.4 478.3 512.6 489.9 512 499.9 C511.4 510 510.2 520.8 510.3 530.1 C510.3 539.3 511.2 547.8 512 555.3 C512.8 562.9 514 569.2 515 575.4 C516 581.6 516.8 587.8 518.1 592.6 C519.3 597.3 520.9 599.7 522.6 603.7 C524.4 607.7 526.6 612.1 528.6 616.6 C530.7 621 534.9 630.5 534.9 630.5 C534.9 630.5 537.1 629.5 537.1 629.5 C537.1 629.5 533.2 620 531.4 615.4 C529.6 610.9 527.8 606.3 526.4 602.3 C525 598.3 523.8 596 522.9 591.4 C522 586.8 521.6 580.7 521 574.6 C520.3 568.5 519.5 562.1 519 554.7 C518.4 547.2 518.1 539 517.7 529.9 C517.4 520.8 517.1 510 517 500.1 C516.9 490.1 517 478.4 517 470.1 C517 461.7 517.2 450 517.2 450 C517.2 450 515.8 450 515.8 450 Z"/>
<path d="M538.1 637.4 C538.1 637.4 540.6 643.4 540.6 643.4 C540.6 643.4 542.4 642.6 542.4 642.6 C542.4 642.6 539.9 636.6 539.9 636.6 C539.9 636.6 538.1 637.4 538.1 637.4 Z"/>
<path d="M542.6 648.3 C542.6 648.3 545.1 655.3 545.1 655.3 C545.1 655.3 546.9 654.7 546.9 654.7 C546.9 654.7 544.4 647.7 544.4 647.7 C544.4 647.7 542.6 648.3 542.6 648.3 Z"/>
<path d="M580 698 a4.5 3.5 0 1 0 9 0 a4.5 3.5 0 1 0 -9 0 Z"/>
<path d="M577.1 690.4 C577.1 690.4 579.7 696.7 579.7 696.7 C579.7 696.7 582.3 695.3 582.3 695.3 C582.3 695.3 578.9 689.6 578.9 689.6 C578.9 689.6 577.1 690.4 577.1 690.4 Z"/>
</g>
<g fill="#fff">
<path d="M246.9 349.7 C246.9 349.7 248.1 352.8 248.8 354.3 C249.5 355.8 251 358.7 251 358.7 C251 358.7 252 358.3 252 358.3 C252 358.3 250.9 355.2 250.2 353.7 C249.5 352.2 247.7 349.3 247.7 349.3 C247.7 349.3 246.9 349.7 246.9 349.7 Z"/>
<path d="M341.5 354.8 C341.6 354 344.2 352.8 346 352 C347.8 351.2 350.5 349.6 352 349.8 C353.5 350.1 354.2 352.1 355 353.5 C355.8 354.9 357.3 357.6 356.5 358.3 C355.7 359.1 351.8 358.3 350 358 C348.2 357.7 346.9 357.1 345.5 356.6 C344.1 356.1 341.4 355.6 341.5 354.8 Z"/>
<path d="M386.5 348.6 C387.6 347.9 389.7 348.6 391 349 C392.3 349.4 393.5 350 394.5 350.8 C395.5 351.6 397.4 353 397 354 C396.6 355 394.2 356 392 356.8 C389.8 357.6 385.2 359.4 384 358.8 C382.8 358.2 384.1 354.7 384.5 353 C384.9 351.3 385.4 349.3 386.5 348.6 Z"/>
<path d="M363 355 L372 355 L372 357.4 L363 357.4 Z"/>
<path d="M442 281 L452 279 L449 285 L444 287 Z"/>
<path d="M173.5 578.9 C173.5 578.9 170.4 587.1 168.8 591.5 C167.2 595.9 165.7 600.4 163.9 605.3 C162.1 610.2 158 620.8 158 620.8 C158 620.8 159 621.2 159 621.2 C159 621.2 164.9 611.5 167.1 606.7 C169.3 601.9 170.9 597.1 172.2 592.5 C173.4 587.9 174.5 579.1 174.5 579.1 C174.5 579.1 173.5 578.9 173.5 578.9 Z"/>
</g>
</svg>
<div style="position:absolute;left:0;top:95px;width:1px;height:3px;background:#000"></div>
<!-- status bar -->
<div id="status"></div>
<div class="sep" style="left:70px"></div>
<div class="sep" style="left:340px"></div>
<div class="sep" style="left:436px"></div>
<div class="sep" style="left:669px"></div>
<div class="t st" style="left:87.6px;transform:scaleX(1.033)">Стр 1, стлб 1</div>
<div class="t st" style="left:352.9px;transform:scaleX(1.094)">100%</div>
<div class="t st" style="left:450.0px;transform:scaleX(1.040)">Windows (CRLF)</div>
<div class="t st" style="left:679.3px;transform:scaleX(1.015)">UTF-16 LE</div>
<svg style="position:absolute;left:880px;top:880px" width="20" height="20" viewBox="880 880 20 20">
  <g fill="#bfbdbd"><rect x="895" y="884.3" width="3.5" height="3.5"/><rect x="889.7" y="889.7" width="3.5" height="3.5"/><rect x="895" y="889.7" width="3.5" height="3.5"/><rect x="884.4" y="895" width="3.5" height="3.5"/><rect x="889.7" y="895" width="3.5" height="3.5"/><rect x="895" y="895" width="3.5" height="3.5"/></g>
</svg>
</body>
</html>
